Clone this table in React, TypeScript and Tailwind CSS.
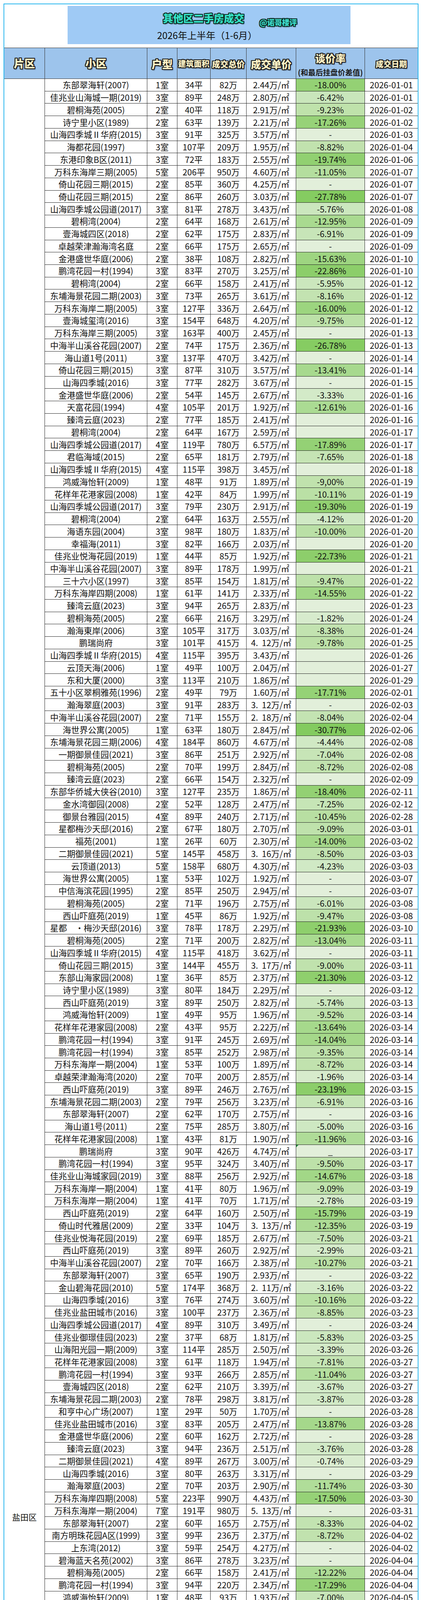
const DATA = `东部翠海轩(2007)|1|34|82|2.44|-18.00%|01-01
佳兆业山海城一期(2019)|3|89|248|2.80|-6.42%|01-01
碧桐海苑(2005)|2|40|118|2.91|-9.23%|01-02
诗宁里小区(1989)|2|63|139|2.21|-17.26%|01-02
山海四季城Ⅱ华府(2015)|3|91|325|3.57|-|01-03
海都花园(1997)|3|107|209|1.95|-8.82%|01-04
东港印象B区(2011)|3|72|183|2.55|-19.74%|01-06
万科东海岸三期(2005)|5|206|950|4.60|-11.05%|01-07
倚山花园三期(2015)|2|85|360|4.25|-|01-07
倚山花园三期(2015)|2|86|260|3.03|-27.78%|01-07
山海四季城公园道(2017)|3|81|278|3.43|-5.76%|01-08
碧桐湾(2004)|2|64|168|2.61|-12.95%|01-09
壹海城四区(2018)|2|62|175|2.83|-6.91%|01-09
^卓越荣津瀚海湾名庭|2|66|175|2.65|-|01-09
金港盛世华庭(2006)|2|38|108|2.82|-15.63%|01-10
鹏湾花园一村(1994)|3|83|270|3.25|-22.86%|01-10
碧桐湾(2004)|2|66|158|2.41|-5.95%|01-12
东埔海景花园二期(2003)|3|73|265|3.61|-8.16%|01-12
万科东海岸二期(2005)|3|127|336|2.64|-16.00%|01-12
壹海城玺湾(2016)|3|154|648|4.20|-9.75%|01-12
万科东海岸三期(2005)|3|163|400|2.45|-|01-13
中海半山溪谷花园(2007)|2|74|175|2.36|-26.78%|01-13
海山道1号(2011)|3|137|470|3.42|-|01-14
倚山花园三期(2015)|3|87|310|3.57|-13.41%|01-14
山海四季城(2016)|3|77|282|3.67|-|01-15
金港盛世华庭(2006)|2|54|145|2.67|-3.33%|01-16
天富花园(1994)|4|105|201|1.92|-12.61%|01-16
臻湾云庭(2023)|2|77|185|2.41||01-16
碧桐湾(2004)|2|64|167|2.59||01-17
山海四季城公园道(2017)|4|119|780|6.57|-17.89%|01-17
君临海域(2015)|2|65|181|2.79|-7.65%|01-18
山海四季城Ⅱ华府(2015)|4|115|398|3.45||01-18
鸿威海怡轩(2009)|1|48|91|1.89|-9,00%|01-19
花样年花港家园(2008)|1|42|84|1.99|-10.11%|01-19
山海四季城公园道(2017)|3|79|230|2.91|-19.30%|01-19
碧桐湾(2004)|2|64|163|2.55|-4.12%|01-20
海语东园(2004)|3|98|180|1.83|-10.00%|01-20
幸福海(2011)|3|82|166|2.03||01-20
佳兆业悦海花园(2019)|1|44|85|1.92|-22.73%|01-21
中海半山溪谷花园(2007)|3|89|178|1.99||01-21
三十六小区(1997)|3|85|154|1.81|-9.47%|01-22
万科东海岸四期(2008)|1|61|141|2.33|-14.55%|01-22
臻湾云庭(2023)|3|94|265|2.83||01-23
碧桐海苑(2005)|2|66|216|3.29|-1.82%|01-24
瀚海東岸(2006)|3|105|317|3.03|-8.38%|01-24
鹏瑞尚府|3|101|415|4.  12|-9.78%|01-25
山海四季城Ⅱ华府(2015)|4|115|395|3.43||01-26
云顶天海(2006)|1|49|100|2.04||01-27
东和大厦(2000)|3|113|210|1.86||01-29
五十小区翠桐雅苑(1996)|2|49|79|1.60|-17.71%|02-01
瀚海翠庭(2003)|3|91|283|3.  12|-|02-03
中海半山溪谷花园(2007)|2|71|155|2.  18|-8.04%|02-04
海世界公寓(2005)|1|63|180|2.84|-30.77%|02-06
东埔海景花园三期(2006)|4|184|860|4.67|-4.44%|02-08
一期御景佳园(2021)|3|86|251|2.92|-7.04%|02-08
碧桐海苑(2005)|2|70|199|2.84|-8.72%|02-08
臻湾云庭(2023)|2|66|154|2.32|-|02-09
东部华侨城大侠谷(2010)|3|127|235|1.86|-18.40%|02-11
金水湾御园(2008)|2|52|128|2.47|-7.25%|02-12
御景台雅园(2015)|4|89|240|2.71|-10.45%|02-28
星都梅沙天邸(2016)|2|67|180|2.70|-9.09%|03-01
福苑(2001)|1|26|60|2.30|-14.00%|03-02
二期御景佳园(2021)|5|145|458|3.  16|-8.50%|03-03
云顶道(2013)|5|158|680|4.30|-4.23%|03-03
海世界公寓(2005)|1|53|102|1.92|-|03-07
中信海滨花园(1995)|2|85|250|2.94|-|03-07
碧桐海苑(2005)|2|71|196|2.75|-6.01%|03-08
西山吓庭苑(2019)|1|45|86|1.92|-9.47%|03-08
星都　·梅沙天邸(2016)|3|78|178|2.29|-21.93%|03-10
碧桐海苑(2005)|2|71|200|2.82|-13.04%|03-11
山海四季城Ⅱ华府(2015)|4|115|418|3.62|-|03-11
倚山花园三期(2015)|3|144|455|3.  17|-9.00%|03-11
东部山海家园(2008)|1|36|85|2.37|-21.30%|03-12
诗宁里小区(1989)|3|80|184|2.29|-|03-12
西山吓庭苑(2019)|3|89|250|2.82|-5.74%|03-13
鸿威海怡轩(2009)|1|49|95|1.96|-9.52%|03-14
花样年花港家园(2008)|2|43|95|2.22|-13.64%|03-14
鹏湾花园一村(1994)|3|91|245|2.69|-14.04%|03-14
鹏湾花园一村(1994)|3|85|252|2.98|-9.35%|03-14
万科东海岸一期(2004)|1|53|100|1.89|-8.72%|03-14
卓越荣津瀚海湾(2020)|2|70|200|2.85|-1.96%|03-14
西山吓庭苑(2019)|3|89|246|2.76|-23.19%|03-15
东埔海景花园二期(2003)|2|79|256|3.23|-6.91%|03-16
东部翠海轩(2007)|2|62|170|2.75|-|03-16
海山道1号(2011)|2|75|285|3.80|-5.00%|03-16
花样年花港家园(2008)|1|43|81|1.90|-11.96%|03-16
鹏瑞尚府|3|90|426|4.74|_|03-17
鹏湾花园一村(1994)|3|95|324|3.40|-9.50%|03-17
佳兆业山海城家园(2019)|3|88|256|2.92|-14.67%|03-18
万科东海岸一期(2004)|1|41|80|1.96|-9.09%|03-19
万科东海岸一期(2004)|1|41|70|1.71|-2.78%|03-19
西山吓庭苑(2019)|2|64|160|2.50|-15.79%|03-19
倚山时代雅居(2009)|2|33|104|3.  13|-12.35%|03-19
佳兆业悦海花园(2019)|2|69|185|2.67|-7.50%|03-21
西山吓庭苑(2019)|3|89|260|2.92|-2.99%|03-21
中海半山溪谷花园(2007)|2|70|166|2.38|-10.27%|03-21
东部翠海轩(2007)|3|65|190|2.93|-|03-22
金山碧海花园(2010)|5|174|368|2.  11|-3.16%|03-22
山海四季城(2016)|3|76|274|3.60|-10.16%|03-22
佳兆业盐田城市(2016)|3|100|237|2.36|-8.85%|03-23
山海四季城公园道(2017)|4|89|310|3.49|-|03-24
佳兆业御璟佳园(2023)|2|37|68|1.81|-5.83%|03-25
山海阳光园一期(2009)|3|114|285|2.50|-3.39%|03-26
花样年花港家园(2008)|3|61|118|1.94|-7.81%|03-27
鹏湾花园一村(1994)|3|93|266|2.85|-11.04%|03-27
壹海城四区(2018)|2|62|210|3.39|-3.67%|03-27
东埔海景花园二期(2003)|2|78|298|3.81|-3.87%|03-28
和亨中心广场(2007)|1|29|50|1.70|-|03-28
佳兆业盐田城市(2016)|3|83|205|2.47|-13.87%|03-28
金港盛世华庭(2006)|2|60|162|2.72|-|03-28
臻湾云庭(2023)|3|94|236|2.51|-3.76%|03-28
二期御景佳园(2021)|4|89|267|3.00|-0.74%|03-29
山海四季城(2016)|3|80|263|3.31|-|03-29
瀚海翠庭(2003)|2|70|203|2.90|-11.74%|03-30
万科东海岸四期(2008)|5|223|990|4.43|-17.50%|03-30
万科东海岸一期(2004)|7|191|980|5.  13|-|03-31
东部翠海轩(2007)|2|60|165|2.75|-8.33%|04-02
南方明珠花园A区(1999)|3|99|236|2.37|-8.72%|04-02
上东湾(2012)|3|59|254|4.27|-|04-02
碧海蓝天名苑(2002)|3|86|278|3.23|-|04-04
碧桐海苑(2005)|2|66|158|2.41|-12.22%|04-04
鹏湾花园一村(1994)|3|94|220|2.34|-17.29%|04-04
鸿威海怡轩(2009)|1|48|93|1.93|-7.00%|04-05
^佳兆业盐田城市广场|4|128|347|2.71|-|04-05
中信海滨花园(1995)|3|111|208|1.87|-24.36%|04-05
半山半海(2015)|5|195|568|2.91|-14.97%|04-06
天琴湾一二期(2008)|3|116|600|5.  16|-13.04%|04-06
臻湾云庭(2023)|3|92|233|2.53|-|04-06
港城蓝山雅园(2016)|3|85|238|2.81|-8.46%|04-07
半山悦海花园(2019)|4|133|520|3.91|-10.34%|04-08
臻湾云庭(2023)|2|70|160|2.30|-12.57%|04-08
二期御景佳园(2021)|3|89|274|3.08|-2.21%|04-09
望辰府(2024)|4|129|328|2.54|-8.89%|04-10
倚山花园三期(2015)|2|81|276|3.40|-|04-10
瀚海翠庭(2003)|2|72|185|2.57|-5.13%|04-11
湖心岛公寓(2007)|1|61|120|1.97|-6.25%|04-11
^卓越荣津瀚海湾名庭|1|31|82|2.66|-11.83%|04-11
翠景花园(1997)|3|90|223|2.46|-4.51%|04-12
二期御景佳园(2021)|3|89|270|3.03|-|04-12
^佳兆业盐田城市广场|4|106|257|2.43|-|04-14
中信海滨花园(1995)|3|111|213|1.92|-10.88%|04-14
^佳兆业盐田城市广场|4|106|283|2.68|-15.08%|04-15
东部翠海轩(2007)|3|96|258|2.68|-3.73%|04-16
中海半山溪谷花园(2007)|2|70|171|2.43|-7.57%|04-16
合泰御景翠峰(2016)|3|91|445|4.89|-1.11%|04-17
^佳兆业盐田城市广场|4|105|256|2.43|-14.83%|04-17
倚山花园三期(2015)|3|89|283|3.  18|-|04-17
金港盛世华庭(2006)|2|38|112|2.92|-|04-18
东埔海景花园二期(2003)|2|78|313|4.00|-|04-19
东埔海景花园二期(2003)|2|77|300|3.90|-|04-19
东港印象(2012)|3|88|235|2.67|-8.91%|04-19
海川阁(2011)|1|32|70|2.  19|-7.89%|04-19
海山居(2000)|3|106|335|3.  15|-15.40%|04-19
鹏湾花园一村(1994)|3|73|225|3.08|-11.07%|04-19
御景台雅园(2015)|4|89|247|2.78|-14.90%|04-20
合泰御景翠峰(2016)|3|91|326|3.58|-|04-21
东埔海景花园二期(2003)|2|78|300|3.83|-|04-22
倚山花园二期(2004)|2|76|208|2.75|-11.49%|04-22
鸿威海怡轩(2009)|1|50|95|1.92|-7.77%|04-24
倚天阁(2004)|1|50|100|2.02|-20.00%|04-24
副食大楼(1996)|3|98|178|1.82|-|04-25
昊海君悦(2013)|3|60|140|2.35|-12.50%|04-26
诗宁里小区(1989)|2|64|139|2.  18|-13.12%|04-28
碧桐湾(2004)|1|38|90|2.37|-5.26%|05-01
东海丽景花园(2002)|3|97|206|2.  12|-|05-01
海山居(2000)|3|109|360|3.31|-|05-01
万科东海岸四期(2008)|5|223|1066|4.78|-3.09%|05-01
望辰府(2024)|3|90|270|2.99|-9.40%|05-01
中海半山溪谷花园(2007)|2|70|164|2.35|-9.00%|05-02
福苑(2001)|1|26|59|2.27|-8.77%|05-04
建筑公司职工宿舍|3|95|199|2.09|-4.33%|05-05
星都　·梅沙天邸(2016)|2|60|174|2.90|-|05-06
西山吓庭苑(2019)|2|64|168|2.63|-16.83%|05-07
^卓越荣津瀚海湾名庭|2|66|188|2.86|-1.57%|05-07
^东部华侨城大侠谷公寓|2|94|210|2.23|-7.89%|05-08
一期御景佳园(2021)|3|90|260|2.89|-11.86%|05-09
南方明珠花园A区(1999)|4|117|212|1.81|-2.75%|05-10
西山吓庭苑(2019)|1|45|95|2.  13|-3.06%|05-10
倚山花园三期(2015)|3|89|360|4.04|-6.49%|05-10
福苑(2001)|3|91|206|2.26|-6.36%|05-13
二期御景佳园(2021)|3|93|303|3.26|-5.31%|05-15
君临海域(2015)|3|79|185|2.35|-21.28%|05-15
翠景花园(1997)|3|105|206|1.96|-9.65%|05-16
万科东海岸一期(2004)|1|54|100|1.84|-2.91%|05-16
和亨中心广场(2007)|1|27|55|2.01|-20.29%|05-17
金水湾御园(2008)|1|33|69|2.06|-14.38%|05-17
上东湾(2012)|3|59|270|4.55|-22.80%|05-17
万科东海岸三期(2005)|2|79|215|2.72|-2.27%|05-17
佳兆业悦海花园(2019)|1|44|90|2.03|-14.29%|05-18
瀚海翠庭(2003)|2|69|185|2.69|-17.78%|05-20
桐辉居(2002)|2|74|172|2.32|-7.03%|05-20
瀚海東岸(2006)|2|63|192|3.03|-12.73%|05-21
倚山花园三期(2015)|4|144|500|3.48|-7.06%|05-21
中海半山溪谷花园(2007)|4|107|245|2.30|-12.50%|05-21
碧桐海苑(2005)|1|41|112|2.77|-3.45%|05-23
万科东海岸二期(2005)|8|257|800|3.  12|-44.83%|05-23
麓港国际(2009)|2|63|162|2.57|-9.50%|05-24
卓越荣津瀚海湾(2020)|1|31|83|2.69|-10.75%|05-24
金山碧海花园(2010)|3|86|240|2.79|-7.69%|05-25
鹏瑞尚府|2|66|275|4.  18|-8.33%|05-25
佳兆业盐田广场(2016)|4|128|342|2.67|-10.00%|05-26
东部翠海轩(2007)|1|42|120|2.86|-|05-27
中英街壹号(2013)|3|88|345|3.92|-11.54%|05-27
东部翠海轩(2007)|3|65|175|2.70|-|05-28
梧桐春晓花园(2015)|3|81|316|3.89|-4.24%|05-28
中海半山溪谷花园(2007)|2|78|175|2.25|-12.50%|05-28
东埔海景花园二期(2003)|2|73|280|3.82|-|05-29
佳兆业悦海花园(2019)|2|69|186|2.69|-11.43%|06-01
二期御景佳园(2021)|5|146|426|2.92|-|06-05
金水湾御园(2008)|2|52|129|2.47|-30.54%|06-06
金水湾御园(2008)|2|71|173|2.44|-17.62%|06-06
山泉小区(1985)|2|70|146|2.08|-7.72%|06-06
东埔海景花园二期(2003)|2|79|388|4.90|-9.35%|06-07
佳兆业悦海花园(2019)|1|44|98|2.21|-10.91%|06-07
君临海域(2015)|2|67|168|2.51|-|06-07
倚山花园三期(2015)|3|89|288|3.23|-|06-07
蓝郡西堤(2014)|4|141|875|6.  19|-4.89%|06-08
倚山花园三期(2015)|5|186|635|3.41|-|06-08
佳兆业悦海花园(2019)|1|44|99|2.23|-5.71%|06-10
瀚海翠庭(2003)|3|95|280|2.96|-3.45%|06-12
山海四季城(2016)|3|77|273|3.56|-|06-12
水云间雅居(2002)|1|56|91|1.64|-15.74%|06-12
山海四季城(2016)|3|80|295|3.69|-10.61%|06-13
万科东海岸四期(2008)|2|89|203|2.29|-5.58%|06-14
^卫生系统职工住宅楼|3|85|153|1.81|-8.93%|06-15
海滨假日(2008)|3|47|137|2.92|-5.66%|06-19
裕达华庭(2007)|1|17|57|3.37|-5.00%|06-20
东埔海景花园二期(2003)|3|92|406|4.39|-11.35%|06-21
二期御景佳园(2021)|3|89|275|3.08|-8.33%|06-26
泊岸雅苑(2007)|1|42|66|1.57|-5.71%|06-26
东部阳光(2001)|3|126|360|2.87|-10.00%|06-28
金海雅居(2006)|2|67|130|1.93|-17.72%|06-30`;

const rows = DATA.split("\n").map((l) => l.split("|"));

// colour scale for 谈价率 (light -> darker green as the cut grows)
const STOPS: [number, number[]][] = [
  [0, [220, 237, 211]],
  [5, [206, 232, 194]],
  [9, [192, 226, 173]],
  [13, [169, 218, 144]],
  [18, [148, 209, 116]],
  [27, [134, 204, 98]],
  [45, [120, 197, 82]],
];

const rateBg = (r: string) => {
  if (!/\d/.test(r)) return "#e2efda";
  const v = Math.abs(parseFloat(r.replace(",", ".")));
  for (let i = 1; i < STOPS.length; i++) {
    const [v1, c1] = STOPS[i];
    const [v0, c0] = STOPS[i - 1];
    if (v <= v1 || i === STOPS.length - 1) {
      const t = Math.min(1, Math.max(0, (v - v0) / (v1 - v0)));
      const c = c0.map((x, k) => Math.round(x + (c1[k] - x) * t));
      return `rgb(${c[0]},${c[1]},${c[2]})`;
    }
  }
  return "#e2efda";
};

const OUTLINE =
  "[text-shadow:-2px_-2px_0_#1b1b1b,2px_-2px_0_#1b1b1b,-2px_2px_0_#1b1b1b,2px_2px_0_#1b1b1b,0_-2px_0_#1b1b1b,0_2px_0_#1b1b1b,-2px_0_0_#1b1b1b,2px_0_0_#1b1b1b,2px_3px_3px_rgba(0,0,0,0.45)]";
const TEAL_OUTLINE =
  "[text-shadow:-2px_-2px_0_#0d2b24,2px_-2px_0_#0d2b24,-2px_2px_0_#0d2b24,2px_2px_0_#0d2b24,0_-2px_0_#0d2b24,0_2px_0_#0d2b24,-2px_0_0_#0d2b24,2px_0_0_#0d2b24,2px_3px_3px_rgba(0,0,0,0.4)]";

const cell = "flex items-center justify-center overflow-hidden whitespace-pre border-r border-[#262626]";

const Row = ({ r }: { r: string[] }) => {
  const [name, type, area, total, unit, rate, date] = r;
  const wrapped = name.startsWith("^");
  return (
    <div className="grid h-[31.735px] grid-cols-[262px_77px_85px_92px_127px_176px_135px] border-b border-[#262626]">
      <div className={wrapped ? "flex items-start justify-center overflow-hidden whitespace-pre border-r border-[#262626] leading-[29px]" : cell}>
        {wrapped ? name.slice(1) : name}
      </div>
      <div className={cell}>{type}室</div>
      <div className={cell}>{area}平</div>
      <div className={cell}>{total}万</div>
      <div className={cell}>{unit}万/㎡</div>
      <div className={`${cell} relative`} style={{ backgroundColor: rateBg(rate) }}>
        {rate === "_" && (
          <span className="absolute left-0 top-0 h-0 w-0 border-r-[6px] border-t-[6px] border-r-transparent border-t-[#1f8f3c]" />
        )}
        {rate}
      </div>
      <div className="flex items-center justify-center overflow-hidden whitespace-nowrap">2026-{date}</div>
    </div>
  );
};

export default function App() {
  return (
    <div className="w-[1080px] bg-white px-[9px] pb-[5px] pt-[9px] font-['Noto_Sans_CJK_SC','Noto_Sans',sans-serif] text-[21.5px] leading-[30px] text-[#111]">
      <div className="border-2 border-[#2bb8ee]">
        {/* title */}
        <div className="h-[111px] pt-[4px]">
          <div className="ml-[162px] h-[98px] w-[724px] bg-[#9fcaf5] pt-[14px]">
            <div className="flex items-start pl-[244px]">
              <div className={`text-[26px] font-black leading-[34px] text-[#35e2c6] ${TEAL_OUTLINE}`}>其他区二手房成交</div>
              <div className={`ml-[39px] mt-[16px] text-[19px] font-black leading-[24px] text-[#3ddccb] ${TEAL_OUTLINE}`}>@诺哥楼评</div>
            </div>
            <div className="mt-[4px] pr-[10px] text-center text-[24px] leading-[34px] text-[#111]">2026年上半年（1-6月）</div>
          </div>
        </div>

        {/* header */}
        <div className="grid h-[80px] grid-cols-[104px_262px_77px_85px_92px_127px_176px_135px] border-y border-[#333] bg-[#9dc4ec] font-black text-[#fff3c6]">
          <div className={`flex items-center justify-center border-r border-[#333] text-[27px] leading-[38px] ${OUTLINE}`}>片区</div>
          <div className={`flex items-center justify-center border-r border-[#333] text-[27px] leading-[38px] ${OUTLINE}`}>小区</div>
          <div className={`flex items-center justify-center border-r border-[#333] pt-[4px] text-[27px] leading-[38px] ${OUTLINE}`}>户型</div>
          <div className={`flex items-center justify-center border-r border-[#333] pt-[2px] text-[20px] ${OUTLINE}`}>建筑面积</div>
          <div className={`flex items-center justify-center border-r border-[#333] pt-[2px] text-[21px] ${OUTLINE}`}>成交总价</div>
          <div className={`flex items-center justify-center border-r border-[#333] pt-[4px] text-[26px] leading-[38px] ${OUTLINE}`}>成交单价</div>
          <div className="flex flex-col items-center border-r border-[#333] pt-[10px]">
            <div className={`text-[26px] leading-[32px] ${OUTLINE}`}>谈价率</div>
            <div className="mt-[6px] text-[19px] font-bold leading-[27px] text-[#1a1a1a]">(和最后挂盘价差值)</div>
          </div>
          <div className={`flex items-center justify-center pt-[4px] text-[20px] ${OUTLINE}`}>成交日期</div>
        </div>

        {/* body */}
        <div className="flex">
          <div className="flex w-[104px] shrink-0 items-center justify-center border-r border-[#262626] text-[21px]">盐田区</div>
          <div className="flex-1">
            {rows.map((r, i) => (
              <Row key={i} r={r} />
            ))}
          </div>
        </div>
      </div>
    </div>
  );
}
